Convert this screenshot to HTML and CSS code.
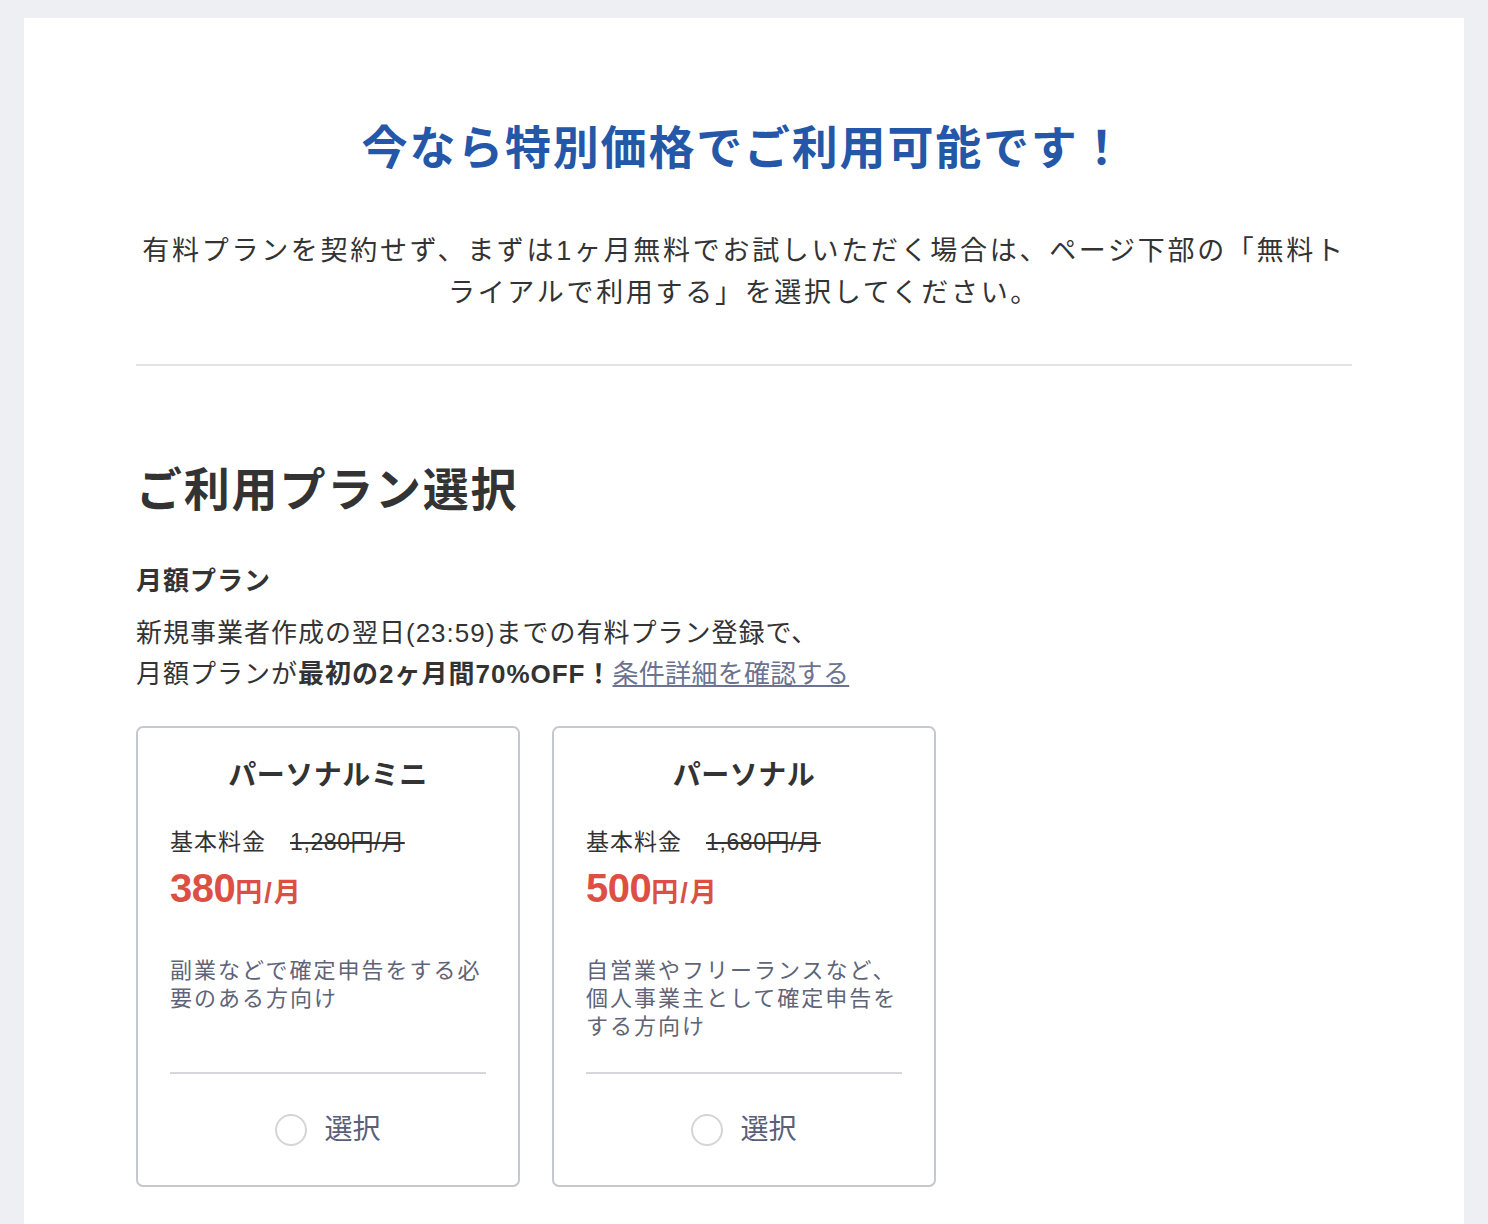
FILE: index.html
```html
<!DOCTYPE html>
<html lang="ja">

<head>
    <meta charset="UTF-8">
    <meta name="viewport" content="width=device-width, initial-scale=1.0">
    <title>ご利用プラン選択</title>
    <link rel="stylesheet" href="styles.css">
</head>

<body>
    <main class="panel">
        <h1 class="lead-title">今なら特別価格でご利用可能です！</h1>
        <p class="lead-text">有料プランを契約せず、まずは1ヶ月無料でお試しいただく場合は、ページ下部の「無料トライアルで利用する」を選択してください。</p>

        <hr class="divider">

        <h2 class="section-title">ご利用プラン選択</h2>

        <h3 class="plan-group">月額プラン</h3>
        <p class="plan-note">
            新規事業者作成の翌日(23:59)までの有料プラン登録で、<br>
            月額プランが<strong>最初の2ヶ月間70%OFF！</strong><a href="#" class="note-link">条件詳細を確認する</a>
        </p>

        <div class="plans">
            <label class="plan">
                <span class="plan-name">パーソナルミニ</span>
                <span class="plan-base">基本料金<s>1,280円/月</s></span>
                <span class="plan-price"><b>380</b>円<i>/</i>月</span>
                <span class="plan-desc">副業などで確定申告をする必要のある方向け</span>
                <span class="plan-select"><input type="radio" name="plan"><span>選択</span></span>
            </label>

            <label class="plan">
                <span class="plan-name">パーソナル</span>
                <span class="plan-base">基本料金<s>1,680円/月</s></span>
                <span class="plan-price"><b>500</b>円<i>/</i>月</span>
                <span class="plan-desc">自営業やフリーランスなど、個人事業主として確定申告をする方向け</span>
                <span class="plan-select"><input type="radio" name="plan"><span>選択</span></span>
            </label>
        </div>
    </main>
</body>

</html>
```

FILE: styles.css
```css
body {
    margin: 0;
    padding: 18px 24px 0;
    background: #eeeff3;
    font-family: "Liberation Sans", "Noto Sans CJK JP", sans-serif;
    color: #333;
}

.panel {
    background: #fff;
    padding: 99px 112px 80px;
}

.lead-title {
    margin: 0;
    font-size: 46px;
    line-height: 62px;
    letter-spacing: 1.8px;
    text-align: center;
    color: #2557a9;
}

.lead-text {
    margin: 51px 0 0;
    font-size: 27px;
    line-height: 42px;
    letter-spacing: 2.7px;
    text-align: center;
}

.divider {
    margin: 50px 0 0;
    border: none;
    height: 2px;
    background: #e3e3e5;
}

.section-title {
    margin: 93px 0 0;
    font-size: 46px;
    line-height: 62px;
    letter-spacing: 1.8px;
}

.plan-group {
    margin: 40px 0 0;
    font-size: 26px;
    line-height: 40px;
    letter-spacing: 1px;
}

.plan-note {
    margin: 12px 0 0;
    font-size: 26px;
    line-height: 41px;
    letter-spacing: 1px;
}

.note-link {
    color: #6b7390;
    letter-spacing: 0.3px;
}

.plans {
    display: flex;
    gap: 32px;
    margin-top: 31px;
}

.plan {
    width: 384px;
    box-sizing: border-box;
    border: 2px solid #c6c8d0;
    border-radius: 7px;
    padding: 28px 32px 35px;
    display: flex;
    flex-direction: column;
}

.plan-name {
    font-size: 28px;
    line-height: 40px;
    font-weight: 700;
    letter-spacing: 0.5px;
    text-align: center;
}

.plan-base {
    margin-top: 30px;
    font-size: 23px;
    line-height: 32px;
    letter-spacing: 1px;
}

.plan-base s {
    margin-left: 24px;
    letter-spacing: 0.6px;
}

.plan-price {
    margin-top: 6px;
    font-size: 27px;
    line-height: 48px;
    font-weight: 700;
    color: #dc5044;
}

.plan-price b {
    font-size: 40px;
    letter-spacing: -0.5px;
}

.plan-price i {
    font-style: normal;
    padding: 0 2px;
}

.plan-desc {
    margin-top: 40px;
    min-height: 84px;
    font-size: 22px;
    line-height: 28px;
    letter-spacing: 2px;
    color: #5f6478;
    border-bottom: 2px solid #d6d7dd;
    padding-bottom: 31px;
}

.plan-select {
    margin-top: 36px;
    display: flex;
    align-items: center;
    justify-content: center;
    gap: 17px;
    font-size: 28px;
    line-height: 40px;
    color: #5b6078;
}

.plan-select input {
    appearance: none;
    margin: 0;
    width: 32px;
    height: 32px;
    border: 2px solid #d4d5db;
    border-radius: 50%;
}
```
